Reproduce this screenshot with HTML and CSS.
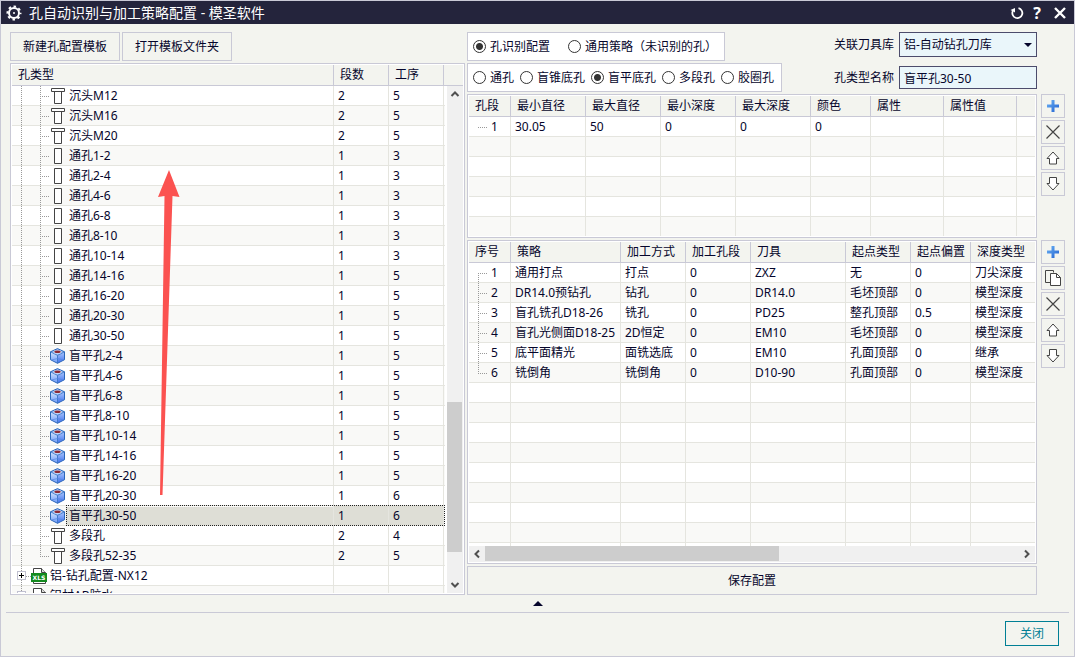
FILE: index.html
```html
<!DOCTYPE html>
<html lang="zh-CN">
<head>
    <meta charset="UTF-8">
    <meta name="viewport" content="width=device-width, initial-scale=1.0">
    <title>孔自动识别与加工策略配置 - 模圣软件</title>
    <link rel="stylesheet" href="styles.css">
</head>
<body>
    <svg class="sprite" width="0" height="0" aria-hidden="true">
        <defs>
            <linearGradient id="blue" x1="0" y1="0" x2="1" y2="1">
                <stop offset="0" stop-color="#6db4f5"/>
                <stop offset="1" stop-color="#1f5fd0"/>
            </linearGradient>
            <linearGradient id="face" x1="0" y1="0" x2="0" y2="1">
                <stop offset="0" stop-color="#d6e6fd"/>
                <stop offset="1" stop-color="#6a98fa"/>
            </linearGradient>
            <linearGradient id="face-dark" x1="0" y1="0" x2="0" y2="1">
                <stop offset="0" stop-color="#a9c6fb"/>
                <stop offset="1" stop-color="#3f70f0"/>
            </linearGradient>
        </defs>
        <symbol id="sink" viewBox="0 0 16 16">
            <path d="M1.5 .5h13v3h-13zM4.5 3.5h7v12h-7z" fill="#fff" stroke="#444"/>
        </symbol>
        <symbol id="through" viewBox="0 0 16 16">
            <path d="M4.500 .5h7v15h-7z" fill="#fff" stroke="#444"/>
        </symbol>
        <symbol id="cube" viewBox="0 0 16 16">
            <path d="M7.500 .6L14.500 3.800 7.500 7.400 .5 3.800z" fill="#9dbdf0"/>
            <path d="M.5 3.800l7 3.600v7.900L.5 11.700z" fill="url(#face)"/>
            <path d="M14.500 3.800l-7 3.600v7.900l7-3.600z" fill="url(#face-dark)"/>
            <path d="M7.500 .6l7 3.200v7.900l-7 3.600-7-3.600V3.800z" fill="none" stroke="#2b66b8"/>
            <path d="M.5 3.800l7 3.600 7-3.600M7.500 7.400v7.900" fill="none" stroke="#3a74c4" stroke-width=".9"/>
            <path d="M7.500 10.500l-6 1.500M7.500 10.500l6 1.500" fill="none" stroke="#5585e0" stroke-width=".7"/>
            <ellipse cx="7.500" cy="3.900" rx="4" ry="1.900" fill="#c9dcfb"/>
            <ellipse cx="7.500" cy="3.700" rx="3.200" ry="1.300" fill="#8c2a36"/>
        </symbol>
        <symbol id="plus" viewBox="0 0 16 16">
            <path d="M6.500 2h3v4.500H14v3H9.500V14h-3V9.500H2v-3h4.500z" fill="url(#blue)"/>
        </symbol>
        <symbol id="cross" viewBox="0 0 16 16">
            <path d="M1.500 1.500l13 13M14.500 1.500l-13 13" fill="none" stroke="#444" stroke-width="1.200"/>
        </symbol>
        <symbol id="up" viewBox="0 0 16 16">
            <path d="M8 2L14 8.500H11.500v5.500h-7V8.500H2z" fill="#fff" stroke="#444"/>
        </symbol>
        <symbol id="down" viewBox="0 0 16 16">
            <path d="M8 14L14 7.500H11.500v-6h-7v6H2z" fill="#fff" stroke="#444"/>
        </symbol>
        <symbol id="copy" viewBox="0 0 16 16">
            <path d="M5 12.500H.5v-12h8v2" fill="none" stroke="#444"/>
            <path d="M5.500 3.500h6l4 4v8h-10z" fill="#fff" stroke="#444"/>
            <path d="M11.500 3.500v4h4" fill="none" stroke="#444"/>
        </symbol>
        <symbol id="chevron" viewBox="0 0 16 16">
            <path d="M4.500 10L8 6.500l3.500 3.500" fill="none" stroke="#505050" stroke-width="2"/>
        </symbol>
    </svg>

    <div class="window">
        <header class="titlebar">
            <svg class="gear" viewBox="0 0 16 16" width="16" height="16">
                <circle cx="8" cy="8" r="5" fill="none" stroke="#fff" stroke-width="2"/>
                <circle cx="8" cy="8" r="6.500" fill="none" stroke="#fff" stroke-width="2" stroke-dasharray="2.500 2.605" stroke-dashoffset="1.250"/>
                <circle cx="8" cy="8" r="1" fill="#fff"/>
            </svg>
            <h1>孔自动识别与加工策略配置 - 模圣软件</h1>
            <button class="win-btn" aria-label="重置">
                <svg viewBox="0 0 14 14" width="14" height="14"><path d="M8.500 2.200A5 5 0 1 1 2.800 5" fill="none" stroke="#fff" stroke-width="1.800"/><path d="M.5 4L5 2v4.500z" fill="#fff"/></svg>
            </button>
            <button class="win-btn help" aria-label="帮助">?</button>
            <button class="win-btn" aria-label="关闭窗口">
                <svg viewBox="0 0 14 14" width="14" height="14"><path d="M2 2l10 10M12 2L2 12" fill="none" stroke="#fff" stroke-width="2.400"/></svg>
            </button>
        </header>

        <main class="content">
            <section class="left">
                <div class="toolbar">
                    <button class="btn">新建孔配置模板</button>
                    <button class="btn">打开模板文件夹</button>
                </div>
                <div class="panel tree">
                    <div class="clip">
                        <table>
                            <colgroup><col><col class="w55"><col class="w55"><col class="w19"></colgroup>
                            <thead>
                                <tr><th>孔类型</th><th>段数</th><th>工序</th><th></th></tr>
                            </thead>
                            <tbody>
                                <tr><td><div class="node"><svg><use href="#sink"/></svg><span>沉头M12</span></div></td><td>2</td><td>5</td><td></td></tr>
                                <tr><td><div class="node"><svg><use href="#sink"/></svg><span>沉头M16</span></div></td><td>2</td><td>5</td><td></td></tr>
                                <tr><td><div class="node"><svg><use href="#sink"/></svg><span>沉头M20</span></div></td><td>2</td><td>5</td><td></td></tr>
                                <tr><td><div class="node"><svg><use href="#through"/></svg><span>通孔1-2</span></div></td><td>1</td><td>3</td><td></td></tr>
                                <tr><td><div class="node"><svg><use href="#through"/></svg><span>通孔2-4</span></div></td><td>1</td><td>3</td><td></td></tr>
                                <tr><td><div class="node"><svg><use href="#through"/></svg><span>通孔4-6</span></div></td><td>1</td><td>3</td><td></td></tr>
                                <tr><td><div class="node"><svg><use href="#through"/></svg><span>通孔6-8</span></div></td><td>1</td><td>3</td><td></td></tr>
                                <tr><td><div class="node"><svg><use href="#through"/></svg><span>通孔8-10</span></div></td><td>1</td><td>3</td><td></td></tr>
                                <tr><td><div class="node"><svg><use href="#through"/></svg><span>通孔10-14</span></div></td><td>1</td><td>3</td><td></td></tr>
                                <tr><td><div class="node"><svg><use href="#through"/></svg><span>通孔14-16</span></div></td><td>1</td><td>5</td><td></td></tr>
                                <tr><td><div class="node"><svg><use href="#through"/></svg><span>通孔16-20</span></div></td><td>1</td><td>5</td><td></td></tr>
                                <tr><td><div class="node"><svg><use href="#through"/></svg><span>通孔20-30</span></div></td><td>1</td><td>5</td><td></td></tr>
                                <tr><td><div class="node"><svg><use href="#through"/></svg><span>通孔30-50</span></div></td><td>1</td><td>5</td><td></td></tr>
                                <tr><td><div class="node"><svg><use href="#cube"/></svg><span>盲平孔2-4</span></div></td><td>1</td><td>5</td><td></td></tr>
                                <tr><td><div class="node"><svg><use href="#cube"/></svg><span>盲平孔4-6</span></div></td><td>1</td><td>5</td><td></td></tr>
                                <tr><td><div class="node"><svg><use href="#cube"/></svg><span>盲平孔6-8</span></div></td><td>1</td><td>5</td><td></td></tr>
                                <tr><td><div class="node"><svg><use href="#cube"/></svg><span>盲平孔8-10</span></div></td><td>1</td><td>5</td><td></td></tr>
                                <tr><td><div class="node"><svg><use href="#cube"/></svg><span>盲平孔10-14</span></div></td><td>1</td><td>5</td><td></td></tr>
                                <tr><td><div class="node"><svg><use href="#cube"/></svg><span>盲平孔14-16</span></div></td><td>1</td><td>5</td><td></td></tr>
                                <tr><td><div class="node"><svg><use href="#cube"/></svg><span>盲平孔16-20</span></div></td><td>1</td><td>5</td><td></td></tr>
                                <tr><td><div class="node"><svg><use href="#cube"/></svg><span>盲平孔20-30</span></div></td><td>1</td><td>6</td><td></td></tr>
                                <tr class="selected"><td><div class="node"><svg><use href="#cube"/></svg><span>盲平孔30-50</span></div></td><td>1</td><td>6</td><td></td></tr>
                                <tr><td><div class="node"><svg><use href="#sink"/></svg><span>多段孔</span></div></td><td>2</td><td>4</td><td></td></tr>
                                <tr><td><div class="node last"><svg><use href="#sink"/></svg><span>多段孔52-35</span></div></td><td>2</td><td>5</td><td></td></tr>
                                <tr>
                                    <td>
                                        <div class="node root">
                                            <button class="expand" aria-label="展开"></button>
                                            <svg viewBox="0 0 16 16">
                                                <path d="M2.500 .5h8l4 4v11h-12z" fill="#fff" stroke="#444"/>
                                                <path d="M10.500 .5v4h4" fill="#ddd" stroke="#444"/>
                                                <path d="M0 5h16v9H0z" fill="#138a1e"/>
                                                <text x="8" y="12" text-anchor="middle" class="xls-text">XLS</text>
                                            </svg>
                                            <span>铝-钻孔配置-NX12</span>
                                        </div>
                                    </td>
                                    <td></td><td></td><td></td>
                                </tr>
                                <tr>
                                    <td>
                                        <div class="node root">
                                            <button class="expand" aria-label="展开"></button>
                                            <svg viewBox="0 0 16 16">
                                                <path d="M2.500 .5h8l4 4v11h-12z" fill="#fff" stroke="#444"/>
                                                <path d="M10.500 .5v4h4" fill="#ddd" stroke="#444"/>
                                                <path d="M0 5h16v9H0z" fill="#138a1e"/>
                                            </svg>
                                            <span>铝材AB胶水</span>
                                        </div>
                                    </td>
                                    <td></td><td></td><td></td>
                                </tr>
                            </tbody>
                        </table>
                    </div>
                    <div class="vscroll">
                        <svg><use href="#chevron"/></svg>
                        <div class="thumb"></div>
                        <svg class="flip"><use href="#chevron"/></svg>
                    </div>
                    <svg class="arrow" viewBox="0 0 22 326" width="22" height="326">
                        <path d="M11 0L21.500 27l-7-1L4.500 325H2L6.500 26l-6.500 1z" fill="#fb5250"/>
                    </svg>
                </div>
            </section>

            <section class="right">
                <div class="options">
                    <div class="groups">
                        <div class="group wide">
                            <label><input type="radio" name="mode" checked>孔识别配置</label>
                            <label><input type="radio" name="mode">通用策略（未识别的孔）</label>
                        </div>
                        <div class="group">
                            <label><input type="radio" name="hole">通孔</label>
                            <label><input type="radio" name="hole">盲锥底孔</label>
                            <label><input type="radio" name="hole" checked>盲平底孔</label>
                            <label><input type="radio" name="hole">多段孔</label>
                            <label><input type="radio" name="hole">胶圈孔</label>
                        </div>
                    </div>
                    <div class="fields">
                        <div class="field">
                            <label for="library">关联刀具库</label>
                            <div class="select">
                                <select id="library"><option>铝-自动钻孔刀库</option></select>
                            </div>
                        </div>
                        <div class="field">
                            <label for="hole-name">孔类型名称</label>
                            <input type="text" id="hole-name" value="盲平孔30-50">
                        </div>
                    </div>
                </div>

                <div class="block segments">
                    <div class="panel">
                        <div class="clip">
                            <table>
                                <colgroup><col class="w42"><col class="w75"><col class="w75"><col class="w75"><col class="w75"><col class="w60"><col class="w73"><col class="w73"><col></colgroup>
                                <thead>
                                    <tr><th>孔段</th><th>最小直径</th><th>最大直径</th><th>最小深度</th><th>最大深度</th><th>颜色</th><th>属性</th><th>属性值</th><th></th></tr>
                                </thead>
                                <tbody>
                                    <tr><td class="num single">1</td><td>30.05</td><td>50</td><td>0</td><td>0</td><td>0</td><td></td><td></td><td></td></tr>
                                    <tr><td></td><td></td><td></td><td></td><td></td><td></td><td></td><td></td><td></td></tr>
                                    <tr><td></td><td></td><td></td><td></td><td></td><td></td><td></td><td></td><td></td></tr>
                                    <tr><td></td><td></td><td></td><td></td><td></td><td></td><td></td><td></td><td></td></tr>
                                    <tr><td></td><td></td><td></td><td></td><td></td><td></td><td></td><td></td><td></td></tr>
                                    <tr><td></td><td></td><td></td><td></td><td></td><td></td><td></td><td></td><td></td></tr>
                                </tbody>
                            </table>
                        </div>
                    </div>
                    <div class="side">
                        <button class="icon-btn" aria-label="添加"><svg><use href="#plus"/></svg></button>
                        <button class="icon-btn" aria-label="删除"><svg><use href="#cross"/></svg></button>
                        <button class="icon-btn" aria-label="上移"><svg><use href="#up"/></svg></button>
                        <button class="icon-btn" aria-label="下移"><svg><use href="#down"/></svg></button>
                    </div>
                </div>

                <div class="block steps">
                    <div class="panel">
                        <div class="clip">
                            <table>
                                <colgroup><col class="w42"><col class="w110"><col class="w65"><col class="w65"><col class="w95"><col class="w65"><col class="w60"><col></colgroup>
                                <thead>
                                    <tr><th>序号</th><th>策略</th><th>加工方式</th><th>加工孔段</th><th>刀具</th><th>起点类型</th><th>起点偏置</th><th>深度类型</th></tr>
                                </thead>
                                <tbody>
                                    <tr><td class="num first">1</td><td>通用打点</td><td>打点</td><td>0</td><td>ZXZ</td><td>无</td><td>0</td><td>刀尖深度</td></tr>
                                    <tr><td class="num">2</td><td>DR14.0预钻孔</td><td>钻孔</td><td>0</td><td>DR14.0</td><td>毛坯顶部</td><td>0</td><td>模型深度</td></tr>
                                    <tr><td class="num">3</td><td>盲孔铣孔D18-26</td><td>铣孔</td><td>0</td><td>PD25</td><td>整孔顶部</td><td>0.5</td><td>模型深度</td></tr>
                                    <tr><td class="num">4</td><td>盲孔光侧面D18-25</td><td>2D恒定</td><td>0</td><td>EM10</td><td>毛坯顶部</td><td>0</td><td>模型深度</td></tr>
                                    <tr><td class="num">5</td><td>底平面精光</td><td>面铣选底</td><td>0</td><td>EM10</td><td>孔面顶部</td><td>0</td><td>继承</td></tr>
                                    <tr><td class="num end">6</td><td>铣倒角</td><td>铣倒角</td><td>0</td><td>D10-90</td><td>孔面顶部</td><td>0</td><td>模型深度</td></tr>
                                    <tr><td></td><td></td><td></td><td></td><td></td><td></td><td></td><td></td></tr>
                                    <tr><td></td><td></td><td></td><td></td><td></td><td></td><td></td><td></td></tr>
                                    <tr><td></td><td></td><td></td><td></td><td></td><td></td><td></td><td></td></tr>
                                    <tr><td></td><td></td><td></td><td></td><td></td><td></td><td></td><td></td></tr>
                                    <tr><td></td><td></td><td></td><td></td><td></td><td></td><td></td><td></td></tr>
                                    <tr><td></td><td></td><td></td><td></td><td></td><td></td><td></td><td></td></tr>
                                    <tr><td></td><td></td><td></td><td></td><td></td><td></td><td></td><td></td></tr>
                                    <tr><td></td><td></td><td></td><td></td><td></td><td></td><td></td><td></td></tr>
                                    <tr><td></td><td></td><td></td><td></td><td></td><td></td><td></td><td></td></tr>
                                </tbody>
                            </table>
                        </div>
                        <div class="hscroll">
                            <svg class="turn-left"><use href="#chevron"/></svg>
                            <div class="track"><div class="thumb"></div></div>
                            <svg class="turn-right"><use href="#chevron"/></svg>
                        </div>
                    </div>
                    <div class="side">
                        <button class="icon-btn" aria-label="添加"><svg><use href="#plus"/></svg></button>
                        <button class="icon-btn" aria-label="复制"><svg><use href="#copy"/></svg></button>
                        <button class="icon-btn" aria-label="删除"><svg><use href="#cross"/></svg></button>
                        <button class="icon-btn" aria-label="上移"><svg><use href="#up"/></svg></button>
                        <button class="icon-btn" aria-label="下移"><svg><use href="#down"/></svg></button>
                    </div>
                </div>

                <button class="btn save">保存配置</button>
            </section>
        </main>

        <button class="collapse" aria-label="收起"></button>
        <footer class="footer">
            <button class="close">关闭</button>
        </footer>
    </div>
</body>
</html>
```

FILE: styles.css
```css
* {
    box-sizing: border-box;
}
body {
    margin: 0;
    font-family: "Noto Sans", "Noto Sans CJK SC", sans-serif;
    font-size: 12px;
    line-height: 18px;
    color: #05052b;
    background: #f3f4ef;
}
button, input, select {
    font: inherit;
    color: inherit;
    margin: 0;
    padding: 0;
    border-radius: 0;
}
.sprite {
    position: absolute;
}
.window {
    display: flex;
    flex-direction: column;
    height: 100vh;
    border: 1px solid #c9c9d6;
}

/* title bar */
.titlebar {
    display: flex;
    align-items: center;
    flex: none;
    height: 23px;
    padding: 0 7px 0 5px;
    background: #24243c;
    color: #fff;
}
.titlebar h1 {
    flex: 1;
    margin: 0 0 0 7px;
    font-size: 14px;
    line-height: 20px;
    font-weight: normal;
}
.win-btn {
    display: flex;
    align-items: center;
    justify-content: center;
    width: 14px;
    height: 20px;
    border: none;
    background: none;
}
.help {
    margin: 0 9px 0 6px;
    font-size: 16px;
    font-weight: bold;
}

/* main area */
.content {
    flex: 1;
    min-height: 0;
    display: grid;
    grid-template-columns: minmax(0, 455fr) minmax(0, 598fr);
    gap: 2px;
    padding: 8px 9px 0;
}
.left, .right {
    display: flex;
    flex-direction: column;
    gap: 2px;
    min-height: 0;
}
.toolbar {
    display: flex;
    gap: 2px;
}
.btn {
    flex: none;
    width: 110px;
    height: 29px;
    border: 1px solid #c9c9d6;
    background: #f3f4ef;
}
.panel {
    position: relative;
    display: flex;
    flex-direction: column;
    flex: 1;
    min-width: 0;
    min-height: 0;
    padding: 1px;
    border: 1px solid #c9c9d6;
    background: #fff;
}
.clip {
    flex: 1;
    min-height: 0;
    overflow: hidden;
}

/* tables */
table {
    width: 100%;
    table-layout: fixed;
    border-collapse: separate;
    border-spacing: 0;
}
th, td {
    height: 20px;
    padding: 0 0 0 4px;
    border-right: 1px solid #e5e5df;
    border-bottom: 1px solid #e5e5df;
    text-align: left;
    font-weight: normal;
    white-space: nowrap;
    overflow: hidden;
}
th {
    height: 21px;
    padding-left: 6px;
    border-color: #c9c9d6;
    background: #f3f4ef;
}
th:last-child, td:last-child {
    border-right: none;
}
tbody tr:nth-child(even) {
    background: #f9f9f7;
}
.w19 { width: 19px; }
.w42 { width: 42px; }
.w55 { width: 55px; }
.w60 { width: 60px; }
.w65 { width: 65px; }
.w73 { width: 73px; }
.w75 { width: 75px; }
.w95 { width: 95px; }
.w110 { width: 110px; }

/* hole tree */
.tree td:first-child {
    padding: 0;
}
.node {
    --down: repeating-linear-gradient(#999 0 1px, transparent 1px 2px);
    --across: repeating-linear-gradient(90deg, #999 0 1px, transparent 1px 2px);
    display: flex;
    align-items: center;
    height: 19px;
    padding-left: 38px;
    background: var(--down) 9px 0 / 1px 19px no-repeat,
        var(--down) 28px 0 / 1px 19px no-repeat,
        var(--across) 30px 10px / 8px 1px no-repeat;
}
.node.last {
    background: var(--down) 9px 0 / 1px 19px no-repeat,
        var(--down) 28px 0 / 1px 11px no-repeat,
        var(--across) 30px 10px / 8px 1px no-repeat;
}
.node.root {
    padding-left: 5px;
    background: var(--down) 9px 0 / 1px 19px no-repeat,
        var(--across) 14px 10px / 5px 1px no-repeat;
}
.node svg {
    flex: none;
    width: 16px;
    height: 16px;
}
.node span {
    flex: 1;
    padding-left: 3px;
}
.expand {
    width: 9px;
    height: 9px;
    margin-right: 5px;
    border: 1px solid #c0c0d0;
    background: linear-gradient(#000, #000) center / 5px 1px no-repeat,
        linear-gradient(#000, #000) center / 1px 5px no-repeat, #fff;
}
.xls-text {
    font: bold 6px "DejaVu Sans", sans-serif;
    fill: #fff;
}
.selected {
    position: relative;
}
.selected td:last-child::after {
    content: "";
    position: absolute;
    inset: -1px 18px 0 54px;
    border: 1px dotted #222;
}
.selected span,
.selected td:nth-child(2),
.selected td:nth-child(3) {
    background: #deded6;
}
.arrow {
    position: absolute;
    left: 147px;
    top: 106px;
}

/* scroll bars */
.vscroll {
    position: absolute;
    top: 22px;
    right: 1px;
    bottom: 1px;
    width: 18px;
    display: grid;
    grid-template-rows: 16px 300fr 150fr 25fr 16px;
    border-left: 2px solid #fff;
    background: #f0f0f0;
}
.vscroll svg, .hscroll svg {
    width: 16px;
    height: 16px;
}
.vscroll .thumb {
    grid-row: 3;
    width: 15px;
}
.vscroll .flip {
    grid-row: 5;
    transform: rotate(180deg);
}
.thumb {
    background: #cdcdcd;
}
.hscroll {
    display: flex;
    flex: none;
    height: 16px;
    background: #f0f0f0;
}
.hscroll .track {
    flex: 1;
}
.hscroll .thumb {
    width: 55%;
    height: 15px;
}
.turn-left {
    transform: rotate(-90deg);
}
.turn-right {
    transform: rotate(90deg);
}

/* options */
.options {
    display: flex;
    justify-content: space-between;
    margin-right: 28px;
}
.groups {
    display: flex;
    flex-direction: column;
    align-items: flex-start;
    gap: 2px;
}
.group {
    display: flex;
    gap: 6px;
    height: 29px;
    padding: 0 7px 0 5px;
    border: 1px solid #c9c9d6;
    background: #fff;
}
.group.wide {
    gap: 18px;
}
.group label {
    display: flex;
    align-items: center;
    gap: 4px;
    white-space: nowrap;
}
input[type="radio"] {
    appearance: none;
    width: 13px;
    height: 13px;
    border: 1px solid #333;
    border-radius: 50%;
    background: #fff;
}
input[type="radio"]:checked {
    background: radial-gradient(#333 0 3px, #fff 4px);
}
.fields {
    display: flex;
    flex-direction: column;
    gap: 9px;
}
.field {
    display: flex;
    align-items: center;
    justify-content: flex-end;
    gap: 5px;
}
.select {
    position: relative;
}
.select::after {
    content: "";
    position: absolute;
    right: 5px;
    top: 11px;
    border: 4px solid transparent;
    border-top-color: #05052b;
    border-bottom: none;
    pointer-events: none;
}
.field select, .field input {
    display: block;
    width: 138px;
    height: 25px;
    padding: 0 4px;
    appearance: none;
    border: 1px solid #4c4c6c;
    background: #eaf6fa;
}
.field input {
    height: 23px;
}

/* hole segments and machining steps */
.block {
    display: flex;
    gap: 4px;
}
.segments {
    flex: none;
    height: 144px;
}
.steps {
    flex: 1;
    min-height: 0;
}
.num {
    --across: repeating-linear-gradient(90deg, #999 0 1px, transparent 1px 2px);
    --down: repeating-linear-gradient(#999 0 1px, transparent 1px 2px);
    padding-left: 22px;
    background: var(--down) 9px 0 / 1px 20px no-repeat,
        var(--across) 9px 10px / 9px 1px no-repeat;
}
.num.first {
    background: var(--down) 9px 10px / 1px 10px no-repeat,
        var(--across) 9px 10px / 9px 1px no-repeat;
}
.num.end {
    background: var(--down) 9px 0 / 1px 10px no-repeat,
        var(--across) 9px 10px / 9px 1px no-repeat;
}
.num.single {
    background: var(--across) 9px 10px / 9px 1px no-repeat;
}
.side {
    display: flex;
    flex-direction: column;
    gap: 2px;
}
.icon-btn {
    display: flex;
    align-items: center;
    justify-content: center;
    width: 24px;
    height: 24px;
    border: 1px solid #c9c9d6;
    background: #f3f4ef;
}
.icon-btn svg {
    width: 16px;
    height: 16px;
}
.save {
    width: auto;
    margin-right: 28px;
}

/* bottom */
.collapse {
    flex: none;
    height: 17px;
    border: none;
    background: none;
}
.collapse::after {
    content: "";
    display: block;
    width: 0;
    margin: 0 auto;
    border: 5px solid transparent;
    border-top: none;
    border-bottom-color: #05052b;
}
.footer {
    display: flex;
    justify-content: flex-end;
    flex: none;
    margin: 0 5px;
    padding: 8px 10px 10px;
    border-top: 1px solid #c9c9d6;
}
.close {
    width: 54px;
    height: 25px;
    border: 1px solid #007f95;
    background: #f3f4ef;
    color: #007f95;
}
```
